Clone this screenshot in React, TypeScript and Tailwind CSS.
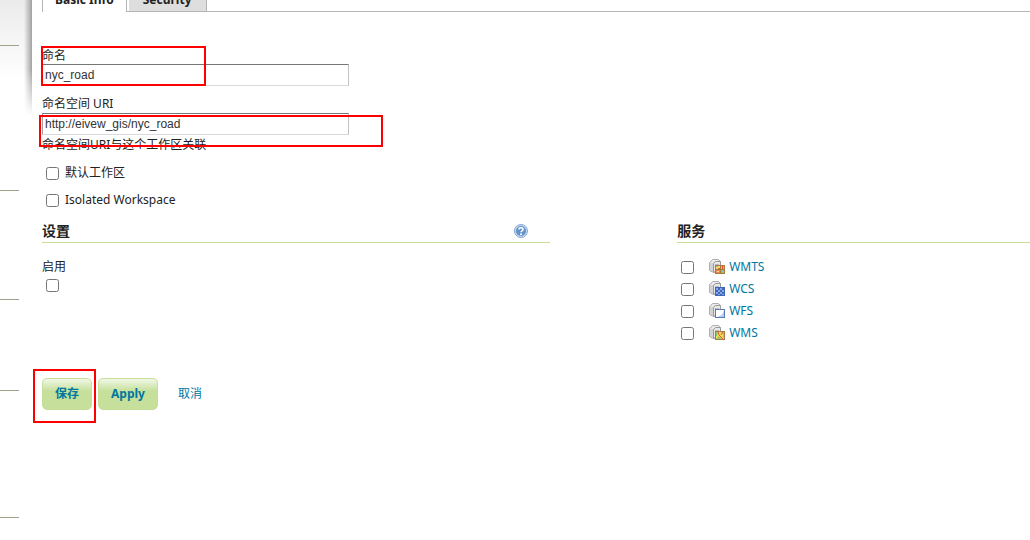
import { useState } from 'react';
import type { ReactNode } from 'react';

interface ServiceItem {
  name: string;
  badge: ReactNode;
}

const services: ServiceItem[] = [
  {
    name: 'WMTS',
    badge: (
      <>
        <rect x="6" y="6" width="10" height="9" fill="#a9793f" />
        <rect x="7" y="7" width="4" height="3" fill="#f7df5e" />
        <rect x="12" y="7" width="3" height="3" fill="#f3b04c" />
        <rect x="7" y="11" width="4" height="3" fill="#ec8455" />
        <rect x="12" y="11" width="3" height="3" fill="#8cc65c" />
        <path d="M7 7h2v1H7zM13 12h2v1h-2z" fill="#7fc3e0" />
        <path d="M9 9h2v1H9zM13 7h1v3h-1z" fill="#e5573a" />
        <path d="M8 12h2v1H8z" fill="#f9e27a" />
      </>
    ),
  },
  {
    name: 'WCS',
    badge: (
      <>
        <rect x="6" y="6" width="10" height="9" fill="#4466b8" />
        <path
          d="M7 7h2v2H7zM11 7h2v2h-2zM9 9h2v2H9zM13 9h2v2h-2zM7 11h2v2H7zM11 11h2v2h-2zM9 13h2v1H9zM13 13h2v1h-2z"
          fill="#86a8ec"
        />
      </>
    ),
  },
  {
    name: 'WFS',
    badge: (
      <>
        <rect x="6.5" y="6.5" width="9" height="8" fill="#fff" stroke="#5b7bb8" />
        <path d="M15 7v7H8c4-1 6-3 7-7z" fill="#b4cef2" />
      </>
    ),
  },
  {
    name: 'WMS',
    badge: (
      <>
        <rect x="6" y="6" width="10" height="9" fill="#a9793f" />
        <rect x="7" y="7" width="8" height="7" fill="#f7d65e" />
        <path d="M7 7h2l-1 4H7zM12 7h3v3z" fill="#8bcb66" />
        <path d="M7 14l3-3 3 3zM14 10h1v4z" fill="#93cc68" />
        <path d="M9 7l1 3 4 4M12 10l2-3" fill="none" stroke="#e5603f" />
      </>
    ),
  },
];

function ServerIcon({ children }: { children: ReactNode }) {
  return (
    <svg width="16" height="16" viewBox="0 0 16 16" aria-hidden="true">
      <path d="M0.5 3.5l3-3h6l2 2v11h-7l-4-2z" fill="#d2d2d2" stroke="#b0b0b0" />
      <path d="M1 4l3-3h5l1 1H6L4 4z" fill="#ececec" />
      <path d="M4.5 13V4.5l2-2h5V13z" fill="#e8e8e8" stroke="#9a9a9a" />
      <path d="M6 5.5h4M6 7.5h4M6 9.5h4M6 11.5h4" stroke="#bcbcbc" />
      {children}
    </svg>
  );
}

function HelpIcon() {
  return (
    <svg width="14" height="14" viewBox="0 0 14 14" aria-hidden="true">
      <circle cx="7" cy="7" r="6.5" fill="#c3d8f0" stroke="#86a9d6" />
      <circle cx="7" cy="7" r="5" fill="#6294cc" />
      <path d="M5 5.5C5 3.3 9 3.3 9 5.5 9 6.8 7 6.8 7 8.3" fill="none" stroke="#fff" strokeWidth="1.5" />
      <rect x="6" y="9.5" width="2" height="1.5" fill="#fff" />
    </svg>
  );
}

// Left menu, only its group separators are in view
function Sidebar() {
  return (
    <aside className="relative w-8 shrink-0">
      <div className="absolute inset-x-0 top-0 h-20 bg-linear-to-b from-[#ebebeb] to-white" />
      <div className="absolute top-0 right-0 h-[116px] w-2 bg-linear-to-r from-transparent to-[#a0a0a0] mask-b-from-60%" />
      <div className="relative w-[19px]">
        <div className="h-[46px] border-b border-[#9aa58b]" />
        <div className="h-[145px] border-b border-[#9aa58b]" />
        <div className="h-[109px] border-b border-[#9aa58b]" />
        <div className="h-[91px] border-b border-[#9aa58b]" />
        <div className="h-[127px] border-b border-[#9aa58b]" />
      </div>
    </aside>
  );
}

function Tabs() {
  return (
    <div className="-mt-5 flex h-8 border-b border-[#b5b5b5] text-[12px] leading-4 font-bold">
      <button type="button" className="-mb-px border-x border-[#b5b5b5] bg-white px-3 pt-2">
        Basic Info
      </button>
      <button type="button" className="ml-[2px] border-r border-[#b5b5b5] bg-[#dedede] px-[14px] pt-2">
        Security
      </button>
    </div>
  );
}

const inputClass =
  'block h-[22px] w-[307px] border border-t-[#767676] border-r-[#c3c3c3] border-b-[#d9d9d9] border-l-[#a0a0a0] bg-white px-[2px] font-["Liberation_Sans",sans-serif] text-[12px] text-[#333] outline-none';

const buttonClass =
  'h-8 rounded-[5px] border border-[#c5df99] bg-linear-to-b from-[#f1f7e6] to-[#c6e09b] to-40% px-3 font-bold text-[#0076a1]';

export default function App() {
  const [name, setName] = useState('nyc_road');
  const [uri, setUri] = useState('http://eivew_gis/nyc_road');

  return (
    <div className='flex min-h-screen overflow-hidden bg-white font-["Noto_Sans","Noto_Sans_CJK_SC",sans-serif] text-[12px] leading-4 text-[#222]'>
      <Sidebar />

      <main className="min-w-0 flex-1 pl-[10px]">
        <Tabs />

        <form onSubmit={(e) => e.preventDefault()}>
          <div className="relative mt-9">
            <label htmlFor="name" className="block">命名</label>
            <input
              id="name"
              value={name}
              onChange={(e) => setName(e.target.value)}
              className={inputClass}
            />
            <div className="pointer-events-none absolute -top-[2px] -left-px h-10 w-[165px] border-2 border-[#f00]" />
          </div>

          <div className="relative mt-[10px]">
            <label htmlFor="uri" className="block">命名空间 URI</label>
            <input
              id="uri"
              value={uri}
              onChange={(e) => setUri(e.target.value)}
              className={`mt-px ${inputClass}`}
            />
            <p className="mt-[2px]">命名空间URI与这个工作区关联</p>
            <div className="pointer-events-none absolute top-[19px] -left-[3px] h-8 w-[344px] border-2 border-[#f00]" />
          </div>

          <label className="mt-3 ml-1 flex items-center gap-[6px]">
            <input type="checkbox" className="size-[13px]" />
            默认工作区
          </label>
          <label className="mt-[11px] ml-1 flex items-center gap-[6px]">
            <input type="checkbox" className="size-[13px]" />
            Isolated Workspace
          </label>

          <div className="mt-[11px] grid grid-cols-[9fr_5fr]">
            <section className="w-4/5">
              <div className="flex h-6 items-center justify-between border-b border-[#c5df99] pr-[22px]">
                <h2 className="text-[14px] font-bold">设置</h2>
                <button type="button" aria-label="Help">
                  <HelpIcon />
                </button>
              </div>
              <label htmlFor="enabled" className="mt-4 block">启用</label>
              <input id="enabled" type="checkbox" className="mt-1 ml-1 block size-[13px]" />
            </section>

            <section>
              <div className="flex h-6 items-center border-b border-[#c5df99]">
                <h2 className="text-[14px] font-bold">服务</h2>
              </div>
              <ul className="mt-[13px]">
                {services.map((service) => (
                  <li key={service.name} className="flex h-[22px] items-center pl-1">
                    <input type="checkbox" aria-label={service.name} className="size-[13px]" />
                    <a href="#" className="ml-[15px] flex items-center gap-1 text-[#0076a1]">
                      <ServerIcon>{service.badge}</ServerIcon>
                      {service.name}
                    </a>
                  </li>
                ))}
              </ul>
            </section>
          </div>

          <div className="relative mt-[34px] flex items-center">
            <button type="submit" className={buttonClass}>保存</button>
            <button type="button" className={`ml-[6px] ${buttonClass}`}>Apply</button>
            <a href="#" className="ml-5 text-[#0076a1]">取消</a>
            <div className="pointer-events-none absolute -top-[9px] -left-[9px] h-[54px] w-[63px] border-2 border-[#f00]" />
          </div>
        </form>
      </main>
    </div>
  );
}
